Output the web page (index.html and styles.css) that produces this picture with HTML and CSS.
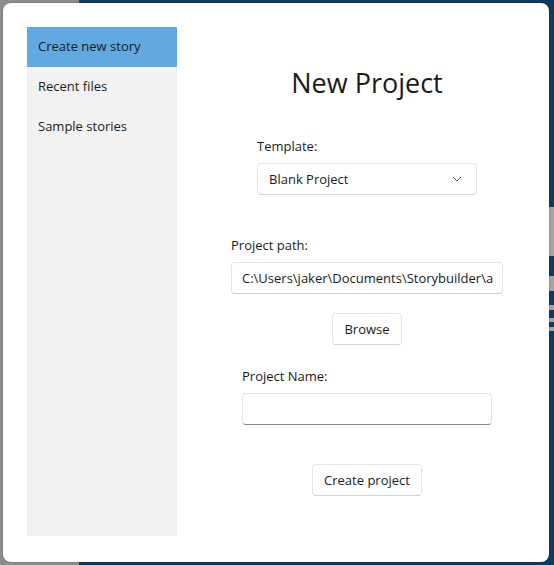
FILE: index.html
```html
<!DOCTYPE html>
<html>
<head>
<meta charset="utf-8">
<link rel="stylesheet" href="styles.css">
</head>
<body>
<div class="dialog">
  <nav class="sidebar">
    <div class="nav-item active">Create new story</div>
    <div class="nav-item">Recent files</div>
    <div class="nav-item">Sample stories</div>
  </nav>
  <main class="main">
    <h1 class="title">New Project</h1>
    <div class="field field-template">
      <div class="label">Template:</div>
      <div class="combo">
        <span>Blank Project</span>
        <svg class="chev" width="10" height="6" viewBox="0 0 10 6"><path d="M1 1 L5 5 L9 1" fill="none" stroke="#5c5c5c" stroke-width="1"/></svg>
      </div>
    </div>
    <div class="field field-path">
      <div class="label">Project path:</div>
      <div class="textbox path-box"><span class="path-text">C:\Users\jaker\Documents\Storybuilder\a</span></div>
    </div>
    <div class="btn browse">Browse</div>
    <div class="field field-name">
      <div class="label">Project Name:</div>
      <div class="textbox name-box"></div>
    </div>
    <div class="btn create">Create project</div>
  </main>
</div>
</body>
</html>
```
FILE: styles.css
```css
html, body {
  margin: 0;
  padding: 0;
  height: 100%;
}
body {
  width: 554px;
  height: 565px;
  overflow: hidden;
  font-family: "Segoe UI", "Open Sans", sans-serif;
  color: #1b1b1b;
  background:
    linear-gradient(to bottom,
      #0f3a5f 0 207px, #a3a3a3 207px 256px, #0f3a5f 256px 276px,
      #a3a3a3 276px 291px, #0f3a5f 291px 305px, #a3a3a3 305px 310px,
      #0f3a5f 310px 318px, #a3a3a3 318px 322px, #0f3a5f 322px 327px,
      #a3a3a3 327px 331px, #0f3a5f 331px) right top / 5px 100% no-repeat,
    linear-gradient(to right, #8c8c8c 0 79px, #0f3a5f 79px);
  box-sizing: border-box;
  padding: 3px 0 0 3px;
}
.dialog {
  width: 546px;
  height: 559px;
  box-sizing: border-box;
  background: #ffffff;
  border-radius: 8px;
  box-shadow: 0 0 0 1px rgba(0,0,0,0.08);
  display: flex;
  padding: 24px 0 26px 24px;
}
.sidebar {
  width: 150px;
  background: #f2f2f2;
  display: flex;
  flex-direction: column;
}
.nav-item {
  height: 40px;
  line-height: 38px;
  padding-bottom: 2px;
  box-sizing: border-box;
  padding-left: 11px;
  font-size: 13px;
  color: #1b1b1b;
}
.nav-item.active {
  background: #62a8e1;
}
.main {
  flex: 1;
  margin-left: 8px;
  display: flex;
  flex-direction: column;
  align-items: center;
}
.title {
  margin: 37px 0 0 0;
  font-size: 27px;
  font-weight: 400;
  line-height: 38px;
  color: #1b1b1b;
}
.field {
  display: flex;
  flex-direction: column;
}
.label {
  font-size: 13px;
  line-height: 20px;
  margin-bottom: 7px;
}
.field-template { margin-top: 34px; }
.field-path { margin-top: 40px; }
.field-name { margin-top: 21px; }
.combo {
  width: 220px;
  height: 32px;
  box-sizing: border-box;
  border: 1px solid #e5e5e5;
  border-bottom-color: #d5d5d5;
  border-radius: 4px;
  display: flex;
  align-items: center;
  justify-content: space-between;
  padding: 0 14px 0 11px;
  font-size: 13px;
}
.textbox {
  height: 32px;
  box-sizing: border-box;
  border: 1px solid #e5e5e5;
  border-bottom-color: #d0d0d0;
  border-radius: 4px;
  display: flex;
  align-items: center;
  padding: 0 0 0 10px;
  font-size: 13px;
  overflow: hidden;
  white-space: nowrap;
}
.path-text { flex: none; }
.path-box { width: 272px; }
.name-box {
  width: 250px;
  border-bottom: 1px solid #868686;
}
.btn {
  height: 32px;
  box-sizing: border-box;
  border: 1px solid #e5e5e5;
  border-bottom-color: #d2d2d2;
  border-radius: 4px;
  display: flex;
  align-items: center;
  justify-content: center;
  font-size: 13px;
  padding: 0 11px;
}
.browse { margin-top: 19px; }
.create { margin-top: 39px; }
```
